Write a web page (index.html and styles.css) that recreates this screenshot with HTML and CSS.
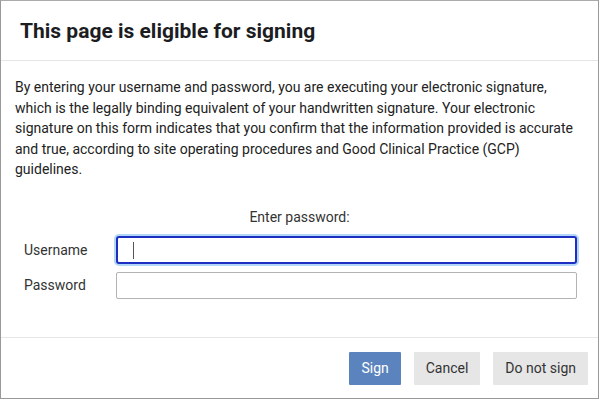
FILE: index.html
```html
<!DOCTYPE html>
<html lang="en">
<head>
  <meta charset="UTF-8">
  <title>Sign page</title>
  <link rel="stylesheet" href="styles.css">
</head>
<body>

<div class="dialog">
  <div class="dialog-header">
    <h2>This page is eligible for signing</h2>
  </div>

  <div class="dialog-body">
    <p class="notice">By entering your username and password, you are executing your electronic signature, which is the legally binding equivalent of your handwritten signature. Your electronic signature on this form indicates that you confirm that the information provided is accurate and true, according to site operating procedures and Good Clinical Practice (GCP) guidelines.</p>

    <div class="prompt">Enter password:</div>

    <div class="login">
      <label for="username">Username</label>
      <div class="field">
        <input type="text" id="username" class="focused">
        <span class="caret"></span>
      </div>
      <label for="password">Password</label>
      <div class="field">
        <input type="password" id="password">
      </div>
    </div>
  </div>

  <div class="dialog-footer">
    <button class="btn btn-primary">Sign</button>
    <button class="btn">Cancel</button>
    <button class="btn">Do not sign</button>
  </div>
</div>

</body>
</html>
```

FILE: styles.css
```css
body {
  margin: 0;
  background: white;
  font-family: Roboto, "Liberation Sans", sans-serif;
  color: #222;
}

.dialog {
  width: 599px;
  height: 399px;
  box-sizing: border-box;
  border: 1px solid #999;
  border-top-color: #aaa;
  display: flex;
  flex-direction: column;
}

.dialog-header {
  height: 59px;
  border-bottom: 1px solid #e6e6e6;
  display: flex;
  align-items: center;
  padding-left: 19px;
}

.dialog-header h2 {
  margin: 0;
  font-size: 21px;
  font-weight: bold;
  color: #1b1d22;
  padding-top: 1px;
}

.dialog-body {
  flex: 1;
  padding: 16px 14px 0 14px;
}

.notice {
  margin: 0;
  font-size: 14px;
  line-height: 20.5px;
  color: #222;
}

.prompt {
  margin-top: 27px;
  text-align: center;
  font-size: 14px;
  line-height: 20px;
  color: #333;
}

.login {
  display: grid;
  grid-template-columns: 92px 1fr;
  row-gap: 8px;
  align-items: center;
  margin: 9px 7px 0 9px;
}

.login label {
  font-size: 14px;
  color: #333;
}

.field {
  position: relative;
}

.field input {
  display: block;
  width: 100%;
  height: 27px;
  box-sizing: border-box;
  border: 1px solid #b3b3b3;
  border-radius: 2px;
  outline: none;
  margin: 0;
  font-family: inherit;
}

.field input.focused {
  height: 28px;
  border: 2px solid #1d2fc2;
  border-radius: 3px;
  box-shadow: 0 0 0 2px #b3d7f7;
}

.caret {
  position: absolute;
  left: 17px;
  top: 6px;
  width: 1px;
  height: 17px;
  background: #555;
}

.dialog-footer {
  height: 60px;
  border-top: 1px solid #e6e6e6;
  display: flex;
  justify-content: flex-end;
  align-items: center;
  gap: 13px;
  padding: 0 10px 0 0;
}

.btn {
  height: 33px;
  padding: 0 12px;
  border: none;
  border-radius: 1px;
  background: #e6e6e6;
  color: #333;
  font-family: inherit;
  font-size: 14px;
}

.btn-primary {
  background: #5b84be;
  color: white;
}
```
